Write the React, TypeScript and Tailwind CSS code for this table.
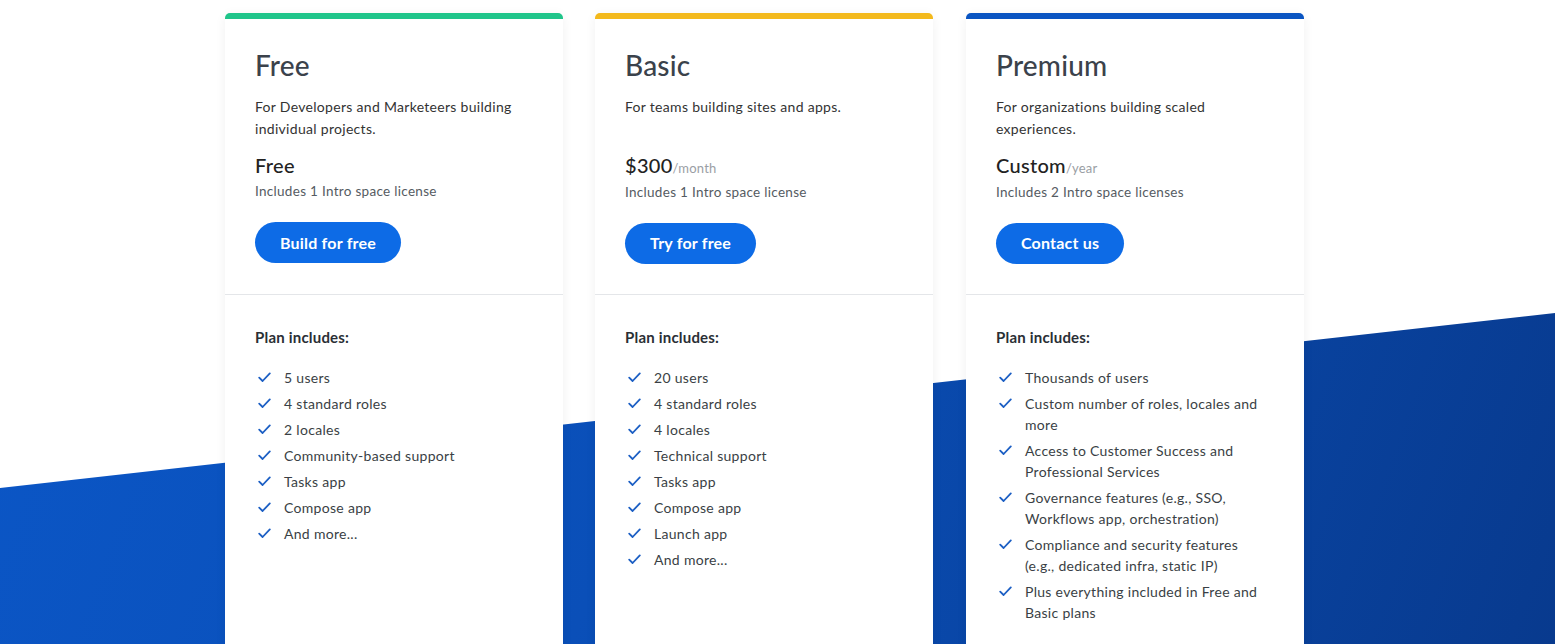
import React from 'react';

interface Plan {
  name: string;
  bar: string;
  desc: string;
  price: string;
  unit?: string;
  license: string;
  cta: string;
  features: string[];
}

const PLANS: Plan[] = [
  {
    name: 'Free',
    bar: 'bg-[#20c58a]',
    desc: 'For Developers and Marketeers building individual projects.',
    price: 'Free',
    license: 'Includes 1 Intro space license',
    cta: 'Build for free',
    features: ['5 users', '4 standard roles', '2 locales', 'Community-based support', 'Tasks app', 'Compose app', 'And more...'],
  },
  {
    name: 'Basic',
    bar: 'bg-[#f3b91c]',
    desc: 'For teams building sites and apps.',
    price: '$300',
    unit: '/month',
    license: 'Includes 1 Intro space license',
    cta: 'Try for free',
    features: ['20 users', '4 standard roles', '4 locales', 'Technical support', 'Tasks app', 'Compose app', 'Launch app', 'And more...'],
  },
  {
    name: 'Premium',
    bar: 'bg-[#0a55c2]',
    desc: 'For organizations building scaled experiences.',
    price: 'Custom',
    unit: '/year',
    license: 'Includes 2 Intro space licenses',
    cta: 'Contact us',
    features: [
      'Thousands of users',
      'Custom number of roles, locales and more',
      'Access to Customer Success and Professional Services',
      'Governance features (e.g., SSO, Workflows app, orchestration)',
      'Compliance and security features (e.g., dedicated infra, static IP)',
      'Plus everything included in Free and Basic plans',
    ],
  },
];

const Check = () => (
  <svg width="13" height="11" viewBox="0 0 13 11" fill="none" className="shrink-0 mt-[5px]">
    <path d="M1.2 5.6 L4.6 9 L11.8 1.4" stroke="#1c5fc4" strokeWidth="1.8" strokeLinecap="round" strokeLinejoin="round" />
  </svg>
);

const PlanCard = ({ plan, extra }: { plan: Plan; extra?: string }) => (
  <div className={`w-[338px] shrink-0 bg-white rounded-t-[5px] overflow-hidden shadow-[0_2px_12px_rgba(0,0,0,0.06)] ${extra ?? ''}`}>
    <div className={`h-[6px] ${plan.bar}`} />
    <div className="px-[30px] pt-[28px] pb-[30px] h-[275px]">
      <h2 className="text-[28px] leading-[36px] text-[#3b424b] font-medium tracking-[0.2px]">{plan.name}</h2>
      <p className="mt-[13px] text-[14px] leading-[22px] text-[#333] h-[44px] w-[275px] tracking-[0.3px]">{plan.desc}</p>
      <div className="mt-[12px] flex items-baseline">
        <span className="text-[20px] leading-[26px] text-[#222] font-medium tracking-[0.3px]">{plan.price}</span>
        {plan.unit && <span className="text-[13px] text-[#9a9ea4] tracking-[0.2px]">{plan.unit}</span>}
      </div>
      <div className="mt-[3px] text-[13.5px] leading-[20px] text-[#555b62] tracking-[0.3px]">{plan.license}</div>
      <button className="mt-[21px] h-[41px] px-[25px] rounded-full bg-[#0d6be6] text-white text-[16px] font-bold tracking-[0.2px]">
        {plan.cta}
      </button>
    </div>
    <div className="border-t border-[#e4e6e9] px-[30px] pt-[31px] h-[360px]">
      <div className="text-[15px] leading-[22px] font-bold text-[#2a2f35] tracking-[0.2px]">Plan includes:</div>
      <ul className="mt-[19px] flex flex-col gap-[5px]">
        {plan.features.map((f) => (
          <li key={f} className="flex gap-[13px] text-[14px] leading-[21px] text-[#3a3f45] pl-[3px] tracking-[0.3px]">
            <Check />
            <span className="w-[245px]">{f}</span>
          </li>
        ))}
      </ul>
    </div>
  </div>
);

export default function App() {
  return (
    <div className="relative w-full h-[644px] overflow-hidden bg-white font-['Lato',sans-serif]">
      <div className="absolute inset-0 bg-[linear-gradient(110deg,#0b57c8_0%,#0a4fb8_45%,#083a8e_100%)] [clip-path:polygon(0_488px,100%_313px,100%_100%,0_100%)]" />
      <div className="relative flex gap-[32px] pl-[225px] pt-[13px]">
        {PLANS.map((p, i) => (
          <PlanCard key={p.name} plan={p} extra={i === 2 ? 'ml-[1px]' : ''} />
        ))}
      </div>
    </div>
  );
}
